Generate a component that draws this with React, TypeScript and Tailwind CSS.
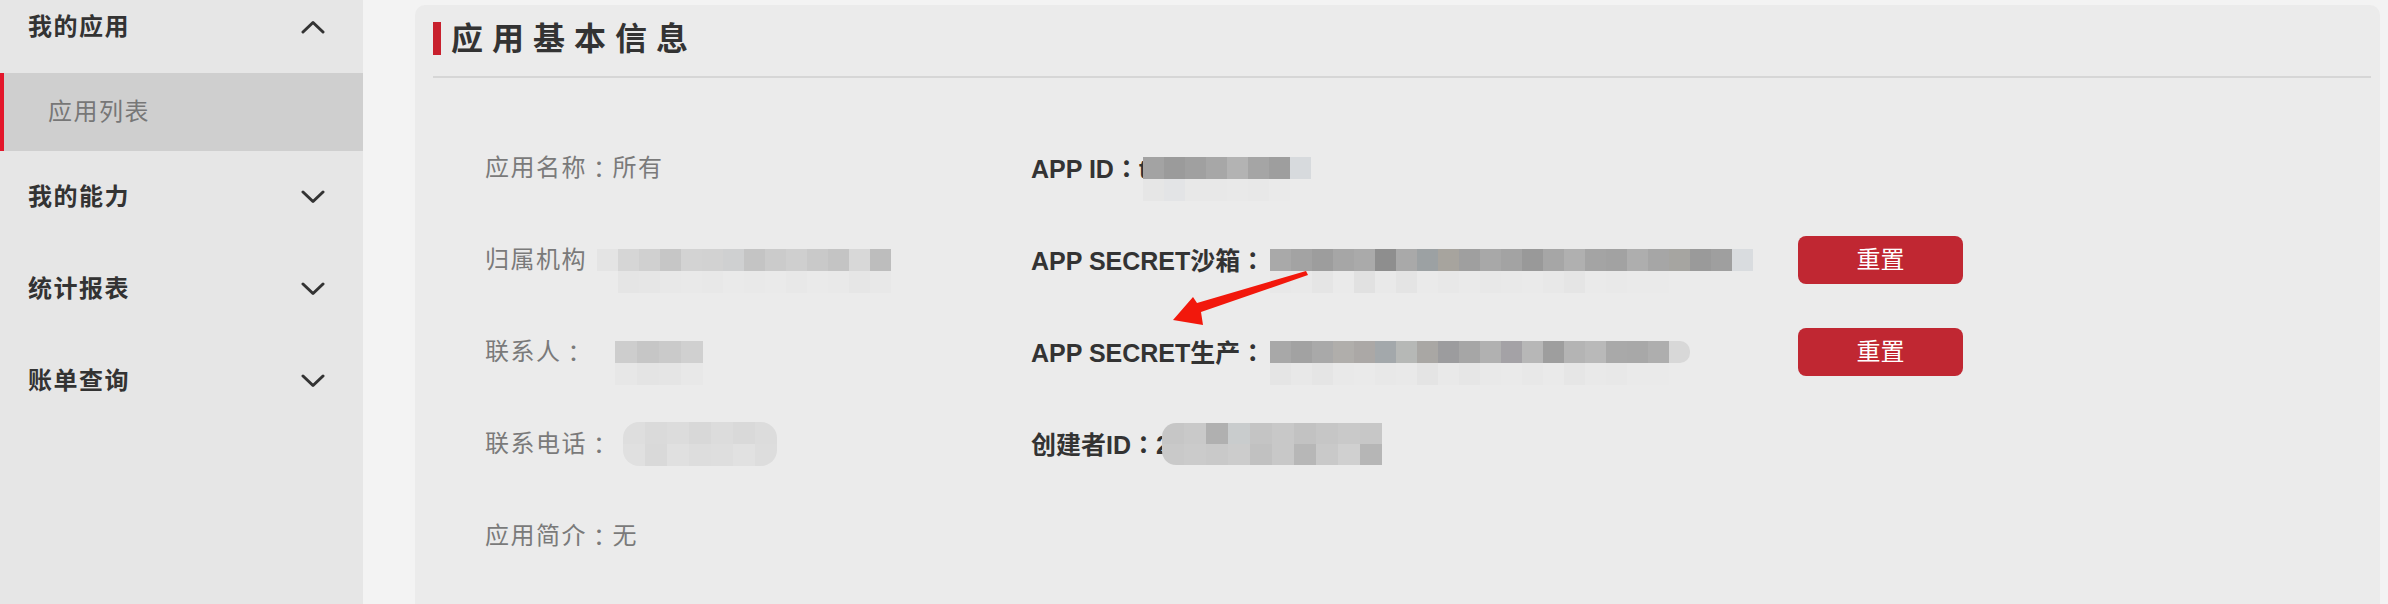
import React from "react";

const FONT = { fontFamily: '"Liberation Sans", "Noto Sans CJK SC", sans-serif' };

type Rows = string[][];

function Colon() {
  return <span className="font-['Noto_Sans_CJK_TC',sans-serif]">：</span>;
}

function Mosaic({ rows, cell = "w-[21px] h-[22px]", className = "" }: { rows: Rows; cell?: string; className?: string }) {
  return (
    <div className={"flex flex-col blur-[0.6px] " + className}>
      {rows.map((r, i) => (
        <div key={i} className="flex">
          {r.map((c, j) => (
            <span key={j} className={c + " " + cell + " shrink-0"} />
          ))}
        </div>
      ))}
    </div>
  );
}

function Chevron({ up }: { up?: boolean }) {
  return (
    <svg width="24" height="14" viewBox="0 0 24 14" className="shrink-0">
      <polyline
        points={up ? "2,12 12,2.5 22,12" : "2,2 12,11.5 22,2"}
        fill="none"
        stroke="#333"
        strokeWidth="3"
        strokeLinecap="round"
        strokeLinejoin="round"
      />
    </svg>
  );
}

function MenuHeader({ label, up }: { label: string; up?: boolean }) {
  return (
    <div className="h-[92px] flex items-center justify-between pl-[28px] pr-[38px]">
      <span className="text-[24px] font-bold text-[#333] tracking-[1.5px] leading-none">{label}</span>
      <Chevron up={up} />
    </div>
  );
}

function LeftCell({ children }: { children: React.ReactNode }) {
  return (
    <div className="flex items-center text-[24px] text-[#7a7a7a] tracking-[1.5px] leading-none whitespace-nowrap">
      {children}
    </div>
  );
}

function RightLabel({ children }: { children: React.ReactNode }) {
  return <span className="text-[25px] font-bold text-[#333] leading-none whitespace-nowrap">{children}</span>;
}

function ResetButton() {
  return (
    <button className="w-[165px] h-[48px] rounded-[8px] bg-[#c02732] text-white text-[24px] leading-none flex items-center justify-center shrink-0">
      重置
    </button>
  );
}

const appIdRows: Rows = [
  ["bg-[#a3a3a3]", "bg-[#9b9b9b]", "bg-[#a0a0a0]", "bg-[#a7a7a7]", "bg-[#b3b3b3]", "bg-[#a5a5a5]", "bg-[#9e9e9e]", "bg-[#d7dadd]"],
  ["bg-[#e6e6e6]", "bg-[#e3e4e6]", "bg-[#e8e8e8]", "bg-[#e8e8e8]", "bg-[#e9e9e9]", "bg-[#e8e8e8]", "bg-[#eaeaea]", "bg-[#ebebeb]"],
];

const sandboxRows: Rows = [
  [
    "bg-[#a9a9a9]", "bg-[#a3a3a3]", "bg-[#9d9d9d]", "bg-[#a6a6a6]", "bg-[#aaaaaa]", "bg-[#8e8e8e]",
    "bg-[#a9a9a9]", "bg-[#9ca1a3]", "bg-[#a7a49e]", "bg-[#9f9f9f]", "bg-[#a8a8a8]", "bg-[#a3a3a3]",
    "bg-[#999999]", "bg-[#a6a6a6]", "bg-[#b0b0b0]", "bg-[#a4a4a4]", "bg-[#a2a2a2]", "bg-[#aeaeae]",
    "bg-[#a6a6a6]", "bg-[#a6a5a1]", "bg-[#9a9a9a]", "bg-[#9f9f9f]", "bg-[#d9dcdf]",
  ],
  [
    "bg-[#e8e8e8]", "bg-[#e9e9e9]", "bg-[#e5e5e5]", "bg-[#eaeaea]", "bg-[#e1e1e1]", "bg-[#e9e9e9]",
    "bg-[#e4e4e4]", "bg-[#eaeaea]", "bg-[#e8e8e8]", "bg-[#eaeaea]", "bg-[#e8e8e8]", "bg-[#e9e9e9]",
    "bg-[#eaeaea]", "bg-[#e8e8e8]", "bg-[#e5e5e5]", "bg-[#eaeaea]", "bg-[#e9e9e9]", "bg-[#eaeaea]",
    "bg-[#eaeaea]", "bg-[#ebebeb]", "bg-[#ebebeb]", "bg-[#ebebeb]", "bg-[#ebebeb]",
  ],
];

const prodRows: Rows = [
  [
    "bg-[#a8a8a8]", "bg-[#a2a2a2]", "bg-[#a9a9a9]", "bg-[#b0aeab]", "bg-[#aba8a6]", "bg-[#a3a8ab]",
    "bg-[#b6b8b6]", "bg-[#a9a7a4]", "bg-[#9c9c9e]", "bg-[#a6a6a6]", "bg-[#b1b1b1]", "bg-[#a4a2a6]",
    "bg-[#b7b7b7]", "bg-[#9e9e9e]", "bg-[#b4b4b4]", "bg-[#b9b9b9]", "bg-[#a9a9a9]", "bg-[#a8a8a8]",
    "bg-[#aeaeae]", "bg-[#d8d8d8] rounded-r-[10px]",
  ],
  [
    "bg-[#e5e5e5]", "bg-[#e8e8e8]", "bg-[#e5e5e5]", "bg-[#e9e9e9]", "bg-[#eaeaea]", "bg-[#e8e8e8]",
    "bg-[#e9e9e9]", "bg-[#e4e4e4]", "bg-[#e9e9e9]", "bg-[#e6e6e6]", "bg-[#e9e9e9]", "bg-[#eaeaea]",
    "bg-[#e8e8e8]", "bg-[#eaeaea]", "bg-[#e6e6e6]", "bg-[#e9e9e9]", "bg-[#e8e8e8]", "bg-[#eaeaea]",
    "bg-[#eaeaea]", "bg-[#ebebeb]",
  ],
];

const creatorRows: Rows = [
  ["bg-[#c6c6c6] rounded-tl-[14px]", "bg-[#c9c9c9]", "bg-[#b0b0b0]", "bg-[#c9cccd]", "bg-[#c4c4c4]", "bg-[#c8c8c8]", "bg-[#c2c2c2]", "bg-[#c6c6c6]", "bg-[#c9c9c9]", "bg-[#c7c7c7]"],
  ["bg-[#c9c9c9] rounded-bl-[14px]", "bg-[#cbcbcb]", "bg-[#c9c9c9]", "bg-[#cccccc]", "bg-[#c1c1c1]", "bg-[#c8c8c8]", "bg-[#b7b7b7]", "bg-[#c9c9c9]", "bg-[#d0d0d0]", "bg-[#b6b6b6]"],
];

const orgRows: Rows = [
  [
    "bg-[#e4e4e4]", "bg-[#d6d6d6]", "bg-[#d0d0d0]", "bg-[#c6c6c6]", "bg-[#d3d3d3]", "bg-[#d2d2d2]",
    "bg-[#cfd0d1]", "bg-[#c4c4c4]", "bg-[#cbcbcb]", "bg-[#cfcfcf]", "bg-[#c9c9c9]", "bg-[#c4c4c4]",
    "bg-[#d8d8d8]", "bg-[#bdbdbd]",
  ],
  [
    "bg-[#ebebeb]", "bg-[#e5e5e5]", "bg-[#e6e6e6]", "bg-[#e8e8e8]", "bg-[#e9e9e9]", "bg-[#e8e8e8]",
    "bg-[#eaeaea]", "bg-[#e9e9e9]", "bg-[#eaeaea]", "bg-[#e8e8e8]", "bg-[#eaeaea]", "bg-[#e9e9e9]",
    "bg-[#e6e6e6]", "bg-[#e8e8e8]",
  ],
];

const contactRows: Rows = [
  ["bg-[#cdcdcd]", "bg-[#c6c6c6]", "bg-[#cacaca]", "bg-[#d0d0d0]"],
  ["bg-[#e7e7e7]", "bg-[#e4e4e4]", "bg-[#e5e5e5]", "bg-[#e8e8e8]"],
];

const phoneRows: Rows = [
  ["bg-[#dedede] rounded-tl-[16px]", "bg-[#dadada]", "bg-[#dcdcdc]", "bg-[#d8d8d8]", "bg-[#dcdcdc]", "bg-[#d9d9d9]", "bg-[#dcdcdc] rounded-tr-[16px]"],
  ["bg-[#e0e0e0] rounded-bl-[16px]", "bg-[#d9d9d9]", "bg-[#e0e0e0]", "bg-[#dddddd]", "bg-[#dedede]", "bg-[#e1e1e1]", "bg-[#dddddd] rounded-br-[16px]"],
];

export default function App() {
  return (
    <div className="relative w-[2388px] h-[604px] overflow-hidden flex bg-[#f3f3f3]" style={FONT}>
      {/* Sidebar */}
      <aside className="w-[363px] shrink-0 bg-[#e6e6e6]">
        <div className="-mt-[19px]">
          <MenuHeader label="我的应用" up />
          <div className="h-[78px] bg-[#cfcfcf] border-l-4 border-[#e3162b] flex items-center pl-[44px]">
            <span className="text-[24px] text-[#777] tracking-[1.5px] leading-none">应用列表</span>
          </div>
          <MenuHeader label="我的能力" />
          <MenuHeader label="统计报表" />
          <MenuHeader label="账单查询" />
        </div>
      </aside>

      {/* Main */}
      <main className="flex-1 pl-[52px] pr-[8px] pt-[5px]">
        <div className="h-[700px] rounded-[10px] bg-[#ebebeb] pl-[18px] pr-[9px] pt-[17px]">
          <div className="flex items-center h-[33px]">
            <span className="w-[8px] h-[33px] bg-[#c8202d] shrink-0" />
            <span className="ml-[10px] text-[32px] font-bold text-[#333] tracking-[9px] leading-none whitespace-nowrap">
              应用基本信息
            </span>
          </div>
          <div className="mt-[21px] h-[2px] bg-[#d6d6d6]" />

          <div className="mt-[44px] pl-[52px] grid grid-cols-[546px_1fr] auto-rows-[92px] items-center">
            {/* Row 1 */}
            <LeftCell>
              应用名称<Colon />所有
            </LeftCell>
            <div className="flex items-center">
              <RightLabel>
                APP ID<Colon />t
              </RightLabel>
              <Mosaic rows={appIdRows} className="-ml-[4px] mt-[22px]" />
            </div>

            {/* Row 2 */}
            <LeftCell>
              归属机构
              <Mosaic rows={orgRows} className="ml-[10px] mt-[22px]" />
            </LeftCell>
            <div className="flex items-center">
              <div className="w-[767px] flex items-center">
                <RightLabel>
                  APP SECRET沙箱<Colon />
                </RightLabel>
                <Mosaic rows={sandboxRows} className="ml-[5px] mt-[22px]" />
              </div>
              <ResetButton />
            </div>

            {/* Row 3 */}
            <LeftCell>
              联系人<Colon />
              <Mosaic rows={contactRows} cell="w-[22px] h-[22px]" className="ml-[28px] mt-[22px]" />
            </LeftCell>
            <div className="flex items-center">
              <div className="w-[767px] flex items-center">
                <RightLabel>
                  APP SECRET生产<Colon />
                </RightLabel>
                <Mosaic rows={prodRows} className="ml-[5px] mt-[22px]" />
              </div>
              <ResetButton />
            </div>

            {/* Row 4 */}
            <LeftCell>
              联系电话<Colon />
              <Mosaic rows={phoneRows} cell="w-[22px] h-[22px]" className="ml-[10px]" />
            </LeftCell>
            <div className="flex items-center">
              <RightLabel>
                创建者ID<Colon />2
              </RightLabel>
              <Mosaic rows={creatorRows} cell="w-[22px] h-[21px]" className="-ml-[8px]" />
            </div>

            {/* Row 5 */}
            <LeftCell>
              应用简介<Colon />无
            </LeftCell>
            <div />
          </div>
        </div>
      </main>

      {/* Annotation arrow */}
      <svg
        className="absolute left-[1160px] top-[265px] pointer-events-none"
        width="160"
        height="70"
        viewBox="0 0 160 70"
      >
        <polygon points="13,55 33,32 37,38 146,6 148,10 41,47 43,60" fill="#f2180c" />
      </svg>
    </div>
  );
}
